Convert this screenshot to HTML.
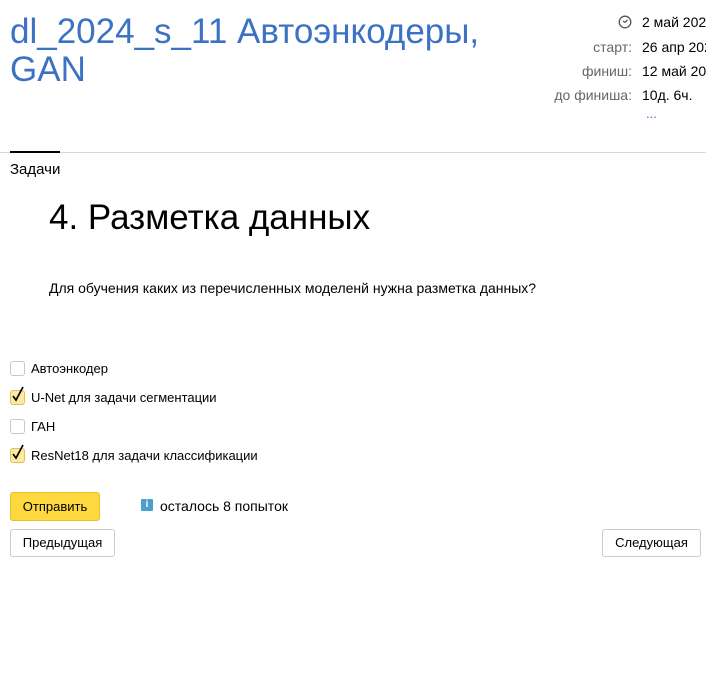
<!DOCTYPE html>
<html><head><meta charset="utf-8"><style>
body{margin:0;width:706px;height:687px;overflow:hidden;background:#fff;font-family:"Liberation Sans",sans-serif;color:#000;position:relative}
.a{position:absolute;white-space:nowrap}
h1{position:absolute;left:10px;top:13px;margin:0;font-weight:normal;font-size:35px;line-height:38px;color:#3c72c4}
.k{color:#666;font-size:14px;text-align:right;right:74px}
.v{font-size:14px;left:642px}
.cb{position:absolute;left:10px;width:13px;height:13px;border:1px solid #c8c8c8;border-radius:3px;background:#fff}
.cb.on{background:#fde9a0;border-color:#e0c060}
.ck{position:absolute;left:0px;top:-5px}
.lb{font-size:13px;left:31px}
.btn{position:absolute;border:1px solid #ccc;border-radius:3px;font-size:13px;text-align:center;background:#fff}
</style></head><body>
<h1>dl_2024_s_11 Автоэнкодеры,<br>GAN</h1>
<svg class="a" style="left:618px;top:15px" width="14" height="14" viewBox="0 0 14 14"><circle cx="7" cy="7" r="5.8" fill="none" stroke="#555" stroke-width="1.3"/><path d="M7 7.5L9.5 5M7 7.5L5 6" fill="none" stroke="#555" stroke-width="1.3"/></svg>
<div class="a v" style="top:14px">2 май 2024</div>
<div class="a k" style="top:39px">старт:</div><div class="a v" style="top:39px">26 апр 2024</div>
<div class="a k" style="top:63px">финиш:</div><div class="a v" style="top:63px">12 май 2024</div>
<div class="a k" style="top:87px">до финиша:</div><div class="a v" style="top:87px">10д. 6ч.</div>
<div class="a" style="left:646px;top:106px;font-size:13px;color:#3c72c4">...</div>
<div class="a" style="left:0;top:152px;width:706px;height:1px;background:#d9d9d9"></div>
<div class="a" style="left:10px;top:151px;width:50px;height:2px;background:#000"></div>
<div class="a" style="left:10px;top:161px;font-size:15px">Задачи</div>
<div class="a" style="left:49px;top:198px;font-size:35px">4. Разметка данных</div>
<div class="a" style="left:49px;top:280px;font-size:14px">Для обучения каких из перечисленных моделенй нужна разметка данных?</div>
<div class="cb" style="top:361px"></div><div class="a lb" style="top:361px">Автоэнкодер</div>
<div class="cb on" style="top:390px"><svg class="ck" width="14" height="16" viewBox="0 0 14 16"><path d="M2 10l3 4L12 1" fill="none" stroke="#000" stroke-width="1.7"/></svg></div><div class="a lb" style="top:390px">U-Net для задачи сегментации</div>
<div class="cb" style="top:419px"></div><div class="a lb" style="top:419px">ГАН</div>
<div class="cb on" style="top:448px"><svg class="ck" width="14" height="16" viewBox="0 0 14 16"><path d="M2 10l3 4L12 1" fill="none" stroke="#000" stroke-width="1.7"/></svg></div><div class="a lb" style="top:448px">ResNet18 для задачи классификации</div>
<div class="btn" style="left:10px;top:492px;width:88px;height:27px;line-height:27px;background:#fdd83f;border-color:#e6c030">Отправить</div>
<div class="a" style="left:141px;top:499px;width:12px;height:12px;background:#4a9fd0;color:#fff;font-size:10px;font-weight:bold;text-align:center;line-height:12px;border-radius:1px">i</div>
<div class="a" style="left:160px;top:498px;font-size:14px">осталось 8 попыток</div>
<div class="btn" style="left:10px;top:529px;width:103px;height:26px;line-height:26px">Предыдущая</div>
<div class="btn" style="left:602px;top:529px;width:97px;height:26px;line-height:26px">Следующая</div>
</body></html>
